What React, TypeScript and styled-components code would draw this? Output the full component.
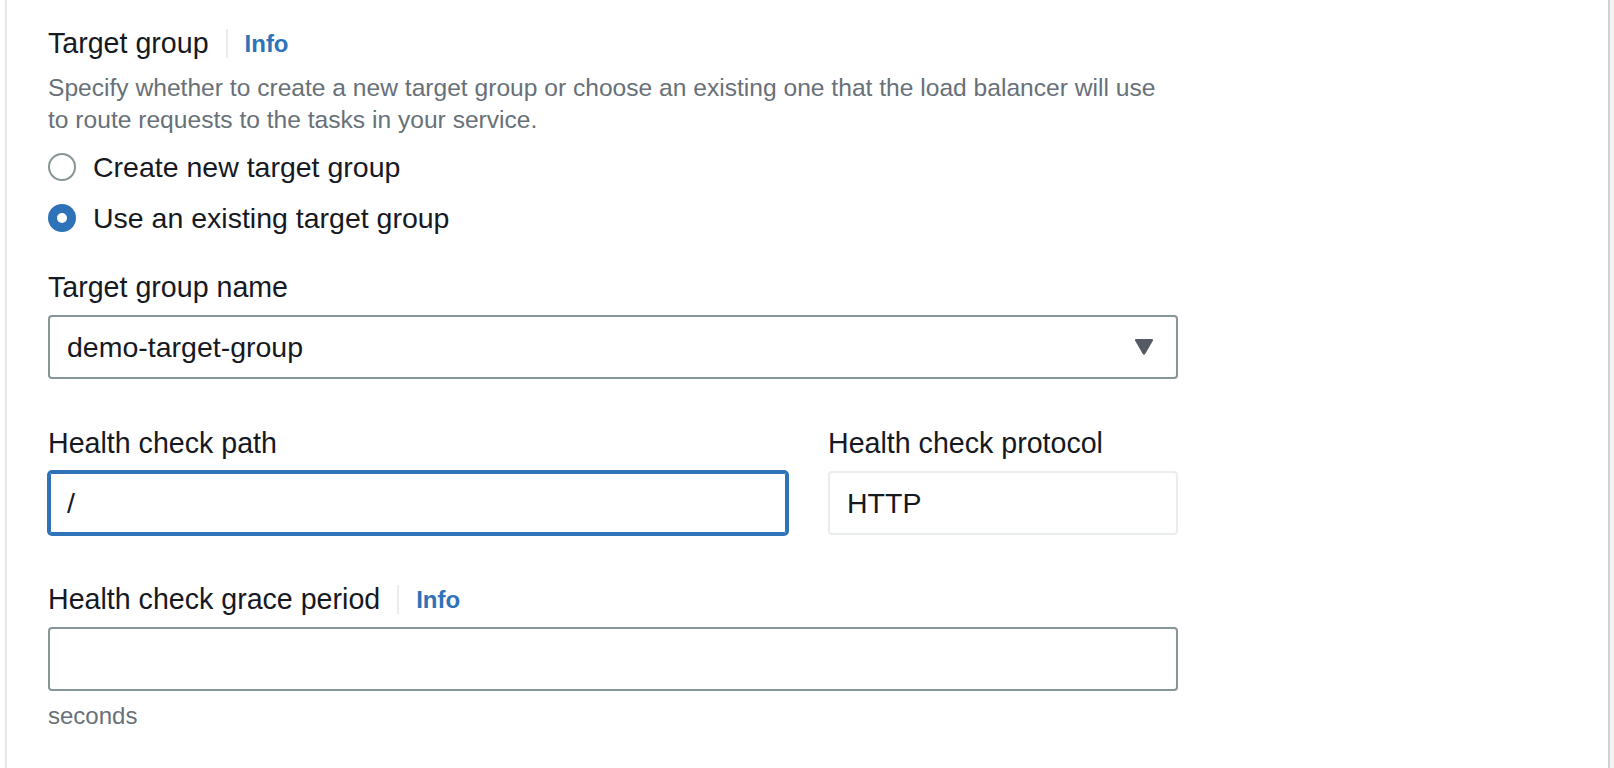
import React from "react";
import styled, { createGlobalStyle } from "styled-components";

const GlobalStyle = createGlobalStyle`
  html, body { margin: 0; padding: 0; }
  body {
    font-family: "Liberation Sans", Arial, sans-serif;
    color: #16191f;
    background: #f2f3f3;
  }
  * { box-sizing: border-box; }
`;

const BLUE = "#2e73b8";
const TEXT = "#16191f";
const MUTED = "#687078";
const BORDER = "#879596";

const Page = styled.div`
  display: flex;
  min-height: 768px;
  background: #f2f3f3;
`;

const Card = styled.div`
  flex: 0 0 1610px;
  display: flex;
  background: #fff;
  padding-left: 5px;
  border-right: 2px solid #cfd3d3;
`;

const Panel = styled.section`
  flex: 1;
  border-left: 2px solid #e6e9ea;
  padding: 21px 0 40px 41px;
`;

const Form = styled.div`
  width: 1130px;
  display: flex;
  flex-direction: column;
`;

const LabelLine = styled.div<{ $mt?: number }>`
  display: flex;
  align-items: center;
  height: 44px;
  margin-top: ${(p) => p.$mt ?? 0}px;
  font-size: 28.6px;
  line-height: 44px;
  color: ${TEXT};
  white-space: nowrap;
`;

const InfoLink = styled.a`
  display: inline-block;
  margin-left: 17px;
  padding-left: 17px;
  border-left: 2px solid #eaeded;
  font-size: 24px;
  line-height: 29px;
  font-weight: 700;
  color: ${BLUE};
  text-decoration: none;
  cursor: pointer;
`;

const Description = styled.p`
  margin: 7px 0 0;
  max-width: 1120px;
  font-size: 24.6px;
  line-height: 32px;
  color: ${MUTED};
`;

const RadioGroup = styled.div`
  display: flex;
  flex-direction: column;
  gap: 7px;
  margin-top: 9px;
`;

const RadioRow = styled.label`
  display: flex;
  align-items: center;
  gap: 17px;
  height: 44px;
  font-size: 28.5px;
  line-height: 44px;
  color: ${TEXT};
  cursor: pointer;
`;

const RadioCircle = styled.span<{ $checked?: boolean }>`
  position: relative;
  flex: 0 0 28px;
  width: 28px;
  height: 28px;
  border-radius: 50%;
  border: 2px solid ${(p) => (p.$checked ? BLUE : BORDER)};
  background: ${(p) => (p.$checked ? BLUE : "#fff")};
  &::after {
    content: "";
    display: ${(p) => (p.$checked ? "block" : "none")};
    position: absolute;
    left: 50%;
    top: 50%;
    width: 10px;
    height: 10px;
    margin: -5px 0 0 -5px;
    border-radius: 50%;
    background: #fff;
  }
`;

const Control = styled.div`
  margin-top: 6px;
`;

const SelectBox = styled.div`
  display: flex;
  align-items: center;
  justify-content: space-between;
  height: 64px;
  padding: 0 22px 0 17px;
  border: 2px solid ${BORDER};
  border-radius: 4px;
  background: #fff;
  font-size: 28.5px;
  color: ${TEXT};
  cursor: pointer;
`;

const Caret = styled.svg`
  width: 20px;
  height: 16px;
  display: block;
`;

const Columns = styled.div`
  display: grid;
  grid-template-columns: 740px 350px;
  column-gap: 40px;
  margin-top: 42px;
`;

const Field = styled.div`
  display: flex;
  flex-direction: column;
`;

const TextInput = styled.input<{ $focused?: boolean; $readonly?: boolean }>`
  display: block;
  width: 100%;
  height: 64px;
  margin: 0;
  padding: 0 17px;
  border: 2px solid
    ${(p) => (p.$focused ? BLUE : p.$readonly ? "#eaeded" : BORDER)};
  border-radius: 4px;
  box-shadow: ${(p) =>
    p.$focused ? `0 0 0 1px ${BLUE}, inset 0 0 0 1px ${BLUE}` : "none"};
  background: #fff;
  font-family: inherit;
  font-size: 28.5px;
  color: ${TEXT};
  outline: none;
`;

const Hint = styled.div`
  margin-top: 9px;
  font-size: 24px;
  line-height: 32px;
  color: ${MUTED};
`;

export default function App() {
  return (
    <>
      <GlobalStyle />
      <Page>
        <Card>
          <Panel>
            <Form>
              <LabelLine>
                Target group
                <InfoLink>Info</InfoLink>
              </LabelLine>
              <Description>
                Specify whether to create a new target group or choose an existing one that the load balancer will use to route requests to the tasks in your service.
              </Description>
              <RadioGroup>
                <RadioRow>
                  <RadioCircle />
                  Create new target group
                </RadioRow>
                <RadioRow>
                  <RadioCircle $checked />
                  Use an existing target group
                </RadioRow>
              </RadioGroup>

              <LabelLine $mt={25}>Target group name</LabelLine>
              <Control>
                <SelectBox>
                  <span>demo-target-group</span>
                  <Caret viewBox="0 0 20 16">
                    <path d="M1 1.5 Q0.6 0 2.2 0 H17.8 Q19.4 0 19 1.5 L11.2 15 Q10 16.6 8.8 15 Z" fill="#545b64" />
                  </Caret>
                </SelectBox>
              </Control>

              <Columns>
                <Field>
                  <LabelLine>Health check path</LabelLine>
                  <Control>
                    <TextInput $focused value="/" readOnly />
                  </Control>
                </Field>
                <Field>
                  <LabelLine>Health check protocol</LabelLine>
                  <Control>
                    <TextInput $readonly value="HTTP" readOnly />
                  </Control>
                </Field>
              </Columns>

              <LabelLine $mt={42}>
                Health check grace period
                <InfoLink>Info</InfoLink>
              </LabelLine>
              <Control>
                <TextInput value="" readOnly />
              </Control>
              <Hint>seconds</Hint>
            </Form>
          </Panel>
        </Card>
      </Page>
    </>
  );
}
